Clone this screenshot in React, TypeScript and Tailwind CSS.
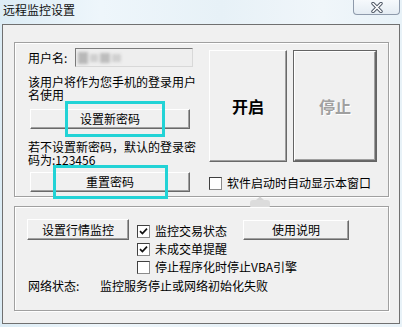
import React from 'react'

const Btn = ({ children, className = '' }: { children: React.ReactNode; className?: string }) => (
  <div
    className={`flex items-center justify-center border border-t-white border-l-white border-r-[#696969] border-b-[#696969] bg-[#f0f0f0] shadow-[inset_-1px_-1px_0_#a0a0a0] ${className}`}
  >
    {children}
  </div>
)

const Check = ({ checked, label }: { checked?: boolean; label: string }) => (
  <div className="flex h-[18px] items-center whitespace-nowrap">
    <div className="flex h-[13px] w-[13px] shrink-0 items-center justify-center border border-t-[#404040] border-l-[#404040] border-r-[#8a8a8a] border-b-[#8a8a8a] bg-white">
      {checked && (
        <svg width="9" height="9" viewBox="0 0 9 9">
          <path d="M1 4.2 L3.4 6.6 L8 1.6" fill="none" stroke="#111" strokeWidth="1.7" />
        </svg>
      )}
    </div>
    <span className="ml-[5px] leading-[12px]">{label}</span>
  </div>
)

const App = () => {
  return (
    <div className="flex h-[327px] w-[402px] flex-col overflow-hidden bg-[linear-gradient(90deg,#dcecf5,#eef6fb_25%,#e7f1f7_55%,#f0f6fa_80%,#e8f2f8)] font-['Noto_Sans_CJK_SC','Noto_Sans',sans-serif] text-[12px] text-black">
      {/* title bar */}
      <div className="flex h-[24px] items-start justify-between">
        <span className="pl-[3px] pt-[3px] text-[12px] leading-[14px] text-[#111]">远程监控设置</span>
        <div className="mr-[2px] flex h-[15px] w-[47px] items-center justify-center rounded-b-[4px] border border-t-0 border-[#8e9aab] bg-[linear-gradient(#f6f9fc,#e4ecf3)]">
          <svg width="14" height="11" viewBox="0 0 14 11">
            <path d="M3 1.5 L11 9.5 M11 1.5 L3 9.5" stroke="#4b5563" strokeWidth="3.4" strokeLinecap="round" />
            <path d="M3 1.5 L11 9.5 M11 1.5 L3 9.5" stroke="#fff" strokeWidth="1.6" strokeLinecap="round" />
          </svg>
        </div>
      </div>

      {/* client area */}
      <div className="relative mx-[2px] h-[300px] border border-[#707070] bg-[#f0f0f0] pl-[11px] pt-[17px]">
        {/* group 1 */}
        <div className="flex h-[155px] w-[375px] border border-[#a0a0a0] shadow-[inset_1px_1px_0_#fff,1px_1px_0_#fff]">
          <div className="flex w-[181px] shrink-0 flex-col pl-[13px] pt-[5px]">
            <div className="flex h-[19px] items-center">
              <span className="w-[47px] leading-[12px]">用户名:</span>
              <div className="relative h-[19px] w-[118px] overflow-hidden border border-t-[#7a7a7a] border-l-[#7a7a7a] border-r-[#d8d8d8] border-b-[#d8d8d8] bg-[#eeeeee]">
                <div className="flex h-full items-center gap-[2px] pl-[2px] blur-[1.5px]">
                  <div className="h-[12px] w-[10px] bg-[#b8b8b8]" />
                  <div className="h-[8px] w-[8px] bg-[#cfcfcf]" />
                  <div className="h-[10px] w-[10px] bg-[#bdbdbd]" />
                  <div className="h-[8px] w-[9px] bg-[#d0d0d0]" />
                </div>
              </div>
            </div>
            <p className="mt-[8px] w-[170px] leading-[13px]">该用户将作为您手机的登录用户名使用</p>
            <Btn className="ml-[2px] mt-[8px] h-[20px] w-[160px]">设置新密码</Btn>
            <p className="mt-[11px] w-[170px] leading-[13px]">若不设置新密码，默认的登录密码为:123456</p>
            <Btn className="ml-[2px] mt-[6px] h-[20px] w-[160px]">重置密码</Btn>
          </div>

          <div className="flex flex-col pl-[13px] pt-[7px]">
            <div className="flex gap-[6px]">
              <Btn className="h-[112px] w-[78px] text-[16px] font-bold">开启</Btn>
              <div className="h-[112px] w-[84px] border border-[#646464]">
                <Btn className="h-full w-full text-[16px] font-bold text-[#a0a0a0] [text-shadow:1px_1px_0_#fff]">停止</Btn>
              </div>
            </div>
            <div className="mt-[12px]">
              <Check label="软件启动时自动显示本窗口" />
            </div>
          </div>
        </div>

        {/* notch between groups */}
        <div className="h-[10px] pl-[236px]">
          <svg width="20" height="11" viewBox="0 0 20 11" className="-mt-[1px] block">
            <path d="M6 4 L10 0.5 L14 4 Z" fill="#d6d6d6" />
            <rect x="0" y="4" width="20" height="8" rx="3" fill="#dcdcdc" />
          </svg>
        </div>

        {/* group 2 */}
        <div className="flex h-[105px] w-[375px] flex-col border border-[#a0a0a0] shadow-[inset_1px_1px_0_#fff,1px_1px_0_#fff]">
          <div className="flex pl-[12px] pt-[12px]">
            <Btn className="h-[21px] w-[102px]">设置行情监控</Btn>
            <div className="ml-[8px] mt-[3px] flex w-[106px] flex-col">
              <Check checked label="监控交易状态" />
              <Check checked label="未成交单提醒" />
              <Check label="停止程序化时停止VBA引擎" />
            </div>
            <Btn className="mt-[1px] h-[20px] w-[106px]">使用说明</Btn>
          </div>
          <div className="mt-[4px] flex pl-[13px] leading-[12px]">
            <span className="w-[72px]">网络状态:</span>
            <span>监控服务停止或网络初始化失败</span>
          </div>
        </div>

        {/* cyan highlight annotations */}
        <div className="absolute left-[62px] top-[76px] h-[36px] w-[100px] border-[3px] border-[#22d3d6]" />
        <div className="absolute left-[50px] top-[140px] h-[34px] w-[115px] border-[3px] border-[#22d3d6]" />
      </div>
    </div>
  )
}

export default App
